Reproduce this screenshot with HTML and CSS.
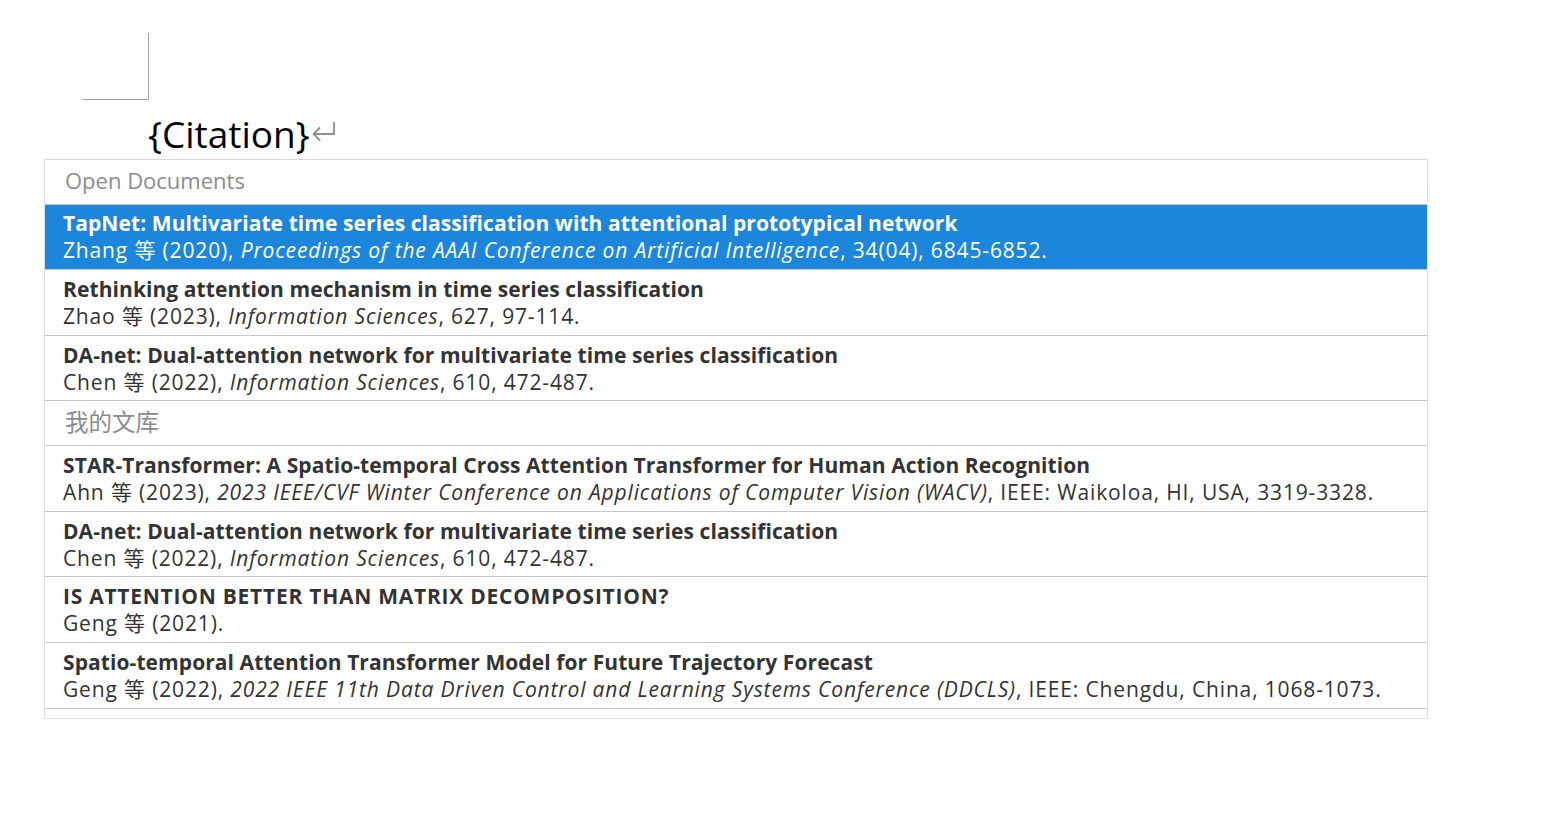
FILE: index.html
```html
<!DOCTYPE html>
<html lang="zh">
<head>
<meta charset="utf-8">
<link rel="stylesheet" href="styles.css">
</head>
<body>
<div class="page">
  <div class="corner"></div>
  <div class="citation">
    <span class="cite-text">{Citation}</span>
    <svg class="ret" width="24" height="24" viewBox="0 0 24 24" aria-hidden="true">
      <path d="M23 4 V16 H2.5" fill="none" stroke="#8f8f8f" stroke-width="1.8"/>
      <path d="M9 9.5 L2.5 16 L9 22.5" fill="none" stroke="#8f8f8f" stroke-width="1.8"/>
    </svg>
  </div>
  <div class="popup">
    <div class="group">Open Documents</div>
    <div class="item selected">
      <div class="title">TapNet: Multivariate time series classification with attentional prototypical network</div>
      <div class="meta">Zhang 等 (2020), <i>Proceedings of the AAAI Conference on Artificial Intelligence</i>, 34(04), 6845-6852.</div>
    </div>
    <div class="item">
      <div class="title">Rethinking attention mechanism in time series classification</div>
      <div class="meta">Zhao 等 (2023), <i>Information Sciences</i>, 627, 97-114.</div>
    </div>
    <div class="item short">
      <div class="title">DA-net: Dual-attention network for multivariate time series classification</div>
      <div class="meta">Chen 等 (2022), <i>Information Sciences</i>, 610, 472-487.</div>
    </div>
    <div class="group cjk">我的文库</div>
    <div class="item">
      <div class="title">STAR-Transformer: A Spatio-temporal Cross Attention Transformer for Human Action Recognition</div>
      <div class="meta">Ahn 等 (2023), <i>2023 IEEE/CVF Winter Conference on Applications of Computer Vision (WACV)</i>, IEEE: Waikoloa, HI, USA, 3319-3328.</div>
    </div>
    <div class="item short">
      <div class="title">DA-net: Dual-attention network for multivariate time series classification</div>
      <div class="meta">Chen 等 (2022), <i>Information Sciences</i>, 610, 472-487.</div>
    </div>
    <div class="item">
      <div class="title caps">IS ATTENTION BETTER THAN MATRIX DECOMPOSITION?</div>
      <div class="meta">Geng 等 (2021).</div>
    </div>
    <div class="item">
      <div class="title">Spatio-temporal Attention Transformer Model for Future Trajectory Forecast</div>
      <div class="meta">Geng 等 (2022), <i>2022 IEEE 11th Data Driven Control and Learning Systems Conference (DDCLS)</i>, IEEE: Chengdu, China, 1068-1073.</div>
    </div>
    <div class="tail"></div>
  </div>
</div>
</body>
</html>
```

FILE: styles.css
```css
html, body {
  margin: 0;
  padding: 0;
  background: #ffffff;
}
body {
  font-family: "Open Sans", "Noto Sans CJK SC", sans-serif;
  color: #333333;
}
.page {
  padding-top: 33px;
}
.corner {
  width: 67px;
  height: 67px;
  margin-left: 82px;
  border-right: 1px solid #a6a6a6;
  border-bottom: 1px solid #a6a6a6;
  box-sizing: border-box;
}
.citation {
  display: flex;
  align-items: flex-start;
  height: 59px;
  padding-left: 148px;
  box-sizing: border-box;
}
.cite-text {
  margin-top: 11px;
  font-size: 37px;
  line-height: 46px;
  color: #000000;
}
.ret {
  margin-top: 18px;
  margin-left: 1px;
  flex: none;
}
.popup {
  margin-left: 44px;
  width: 1384px;
  box-sizing: border-box;
  border: 1px solid #dedede;
  border-top-color: #d9d9d9;
  background: #ffffff;
}
.group {
  height: 45px;
  box-sizing: border-box;
  padding-left: 20px;
  font-size: 22px;
  line-height: 41px;
  color: #8c8c8c;
  border-bottom: 1px solid #c8c8c8;
}
.group.cjk {
  font-size: 23.5px;
  line-height: 43px;
}
.item {
  height: 66px;
  box-sizing: border-box;
  padding: 6px 18px 0;
  border-bottom: 1px solid #c8c8c8;
  font-size: 21px;
  line-height: 27px;
  color: #333333;
  white-space: nowrap;
}
.item.short {
  height: 65px;
}
.item.selected {
  background: #1b86db;
  color: #ffffff;
  height: 65px;
  padding-top: 5px;
}
.title {
  font-weight: 700;
  letter-spacing: 0.08px;
}
.title.caps {
  letter-spacing: 0.75px;
}
.meta {
  letter-spacing: 0.85px;
}
.meta i {
  font-style: italic;
}
.tail {
  height: 9px;
}
```
